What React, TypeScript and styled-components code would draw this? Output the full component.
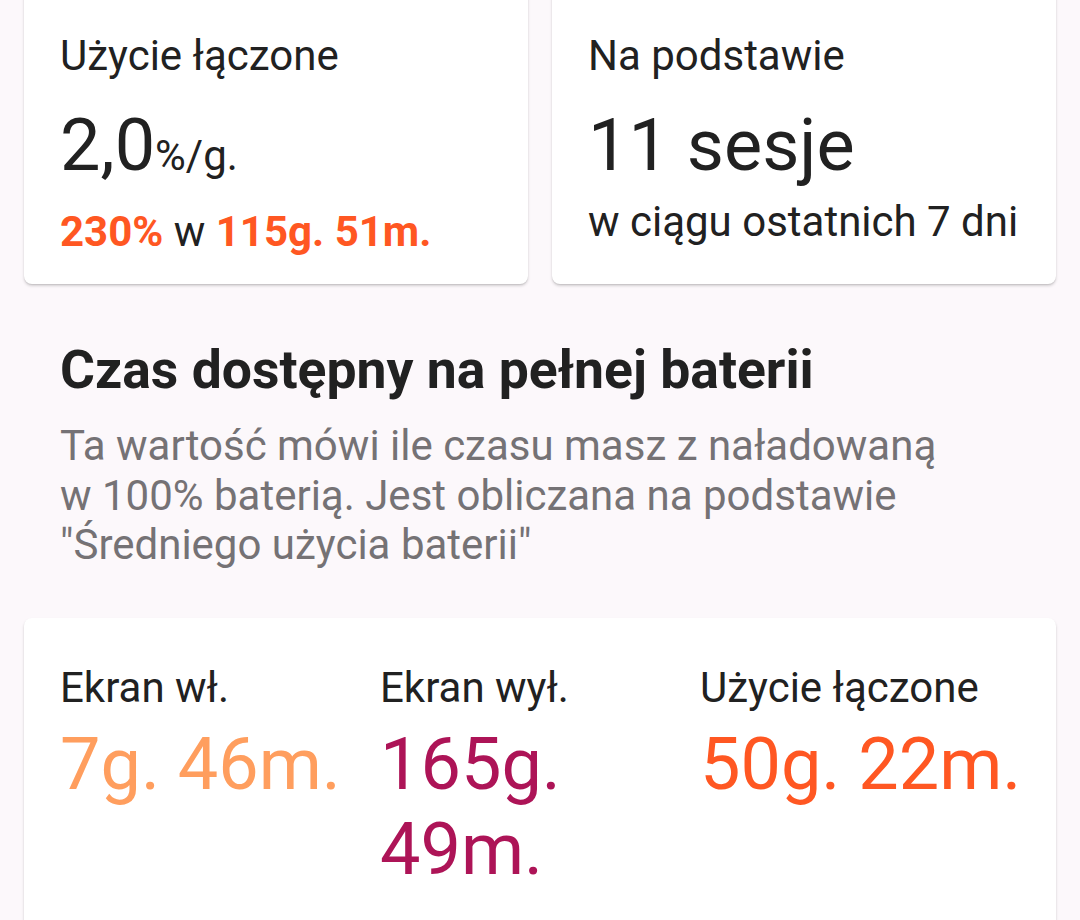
import React from 'react';
import styled, { createGlobalStyle } from 'styled-components';

const GlobalStyle = createGlobalStyle`
  html, body {
    margin: 0;
    padding: 0;
    overflow: hidden;
    background: #fcf8fb;
    font-family: Roboto, "Noto Sans", "Liberation Sans", sans-serif;
    color: #212121;
  }
`

const Page = styled.div`
  display: flex;
  flex-direction: column;
  padding: 0 24px;
  height: 920px;
  overflow: hidden;
`

const TopRow = styled.div`
  display: grid;
  grid-template-columns: 1fr 1fr;
  gap: 24px;
  margin-top: -17px;
`

const Card = styled.div`
  background: #ffffff;
  border-radius: 8px;
  box-shadow: 0 2px 3px rgba(0, 0, 0, 0.16), 0 1px 1px rgba(0, 0, 0, 0.08);
`

const StatCard = styled(Card)`
  display: flex;
  flex-direction: column;
  padding: 48px 24px 28px 36px;
`

const Label = styled.div`
  font-size: 42px;
  line-height: 49px;
  color: #212121;
  white-space: nowrap;
`

const BigValue = styled.div`
  font-size: 72px;
  line-height: 84px;
  margin-top: 24px;
  color: #212121;
  white-space: nowrap;
`

const Unit = styled.span`
  font-size: 42px;
`

const SubLine = styled.div`
  font-size: 42px;
  line-height: 49px;
  margin-top: 9px;
  white-space: nowrap;
`

const Accent = styled.span`
  color: #ff5722;
  font-weight: 700;
`

const Section = styled.div`
  padding: 54px 36px 0;
`

const Heading = styled.h2`
  margin: 0;
  font-size: 53.5px;
  line-height: 63px;
  font-weight: 700;
  color: #212121;
`

const Description = styled.p`
  margin: 20px 0 0;
  font-size: 42px;
  line-height: 49.5px;
  color: #757275;
  max-width: 900px;
`

const TimesCard = styled(Card)`
  margin-top: 48px;
  display: grid;
  grid-template-columns: 320px 320px 1fr;
  padding: 45px 24px 120px 36px;
`

const TimeCol = styled.div`
  display: flex;
  flex-direction: column;
`

const TimeValue = styled.div<{ $color: string }>`
  margin-top: 10px;
  font-size: 72px;
  line-height: 85px;
  color: ${(p) => p.$color};
`

const times = [
  { label: 'Ekran wł.', value: '7g. 46m.', color: '#ff9e5e' },
  { label: 'Ekran wył.', value: '165g. 49m.', color: '#ad1457' },
  { label: 'Użycie łączone', value: '50g. 22m.', color: '#ff5722' },
]

const App: React.FC = () => {
  return (
    <>
      <GlobalStyle />
      <Page>
        <TopRow>
          <StatCard>
            <Label>Użycie łączone</Label>
            <BigValue>2,0<Unit>%/g.</Unit></BigValue>
            <SubLine><Accent>230%</Accent> w <Accent>115g. 51m.</Accent></SubLine>
          </StatCard>
          <StatCard>
            <Label>Na podstawie</Label>
            <BigValue>11 sesje</BigValue>
            <SubLine>w ciągu ostatnich 7 dni</SubLine>
          </StatCard>
        </TopRow>
        <Section>
          <Heading>Czas dostępny na pełnej baterii</Heading>
          <Description>
            Ta wartość mówi ile czasu masz z naładowaną<br />
            w 100% baterią. Jest obliczana na podstawie<br />
            "Średniego użycia baterii"
          </Description>
        </Section>
        <TimesCard>
          {times.map((t) => (
            <TimeCol key={t.label}>
              <Label>{t.label}</Label>
              <TimeValue $color={t.color}>{t.value}</TimeValue>
            </TimeCol>
          ))}
        </TimesCard>
      </Page>
    </>
  )
}

export default App;
